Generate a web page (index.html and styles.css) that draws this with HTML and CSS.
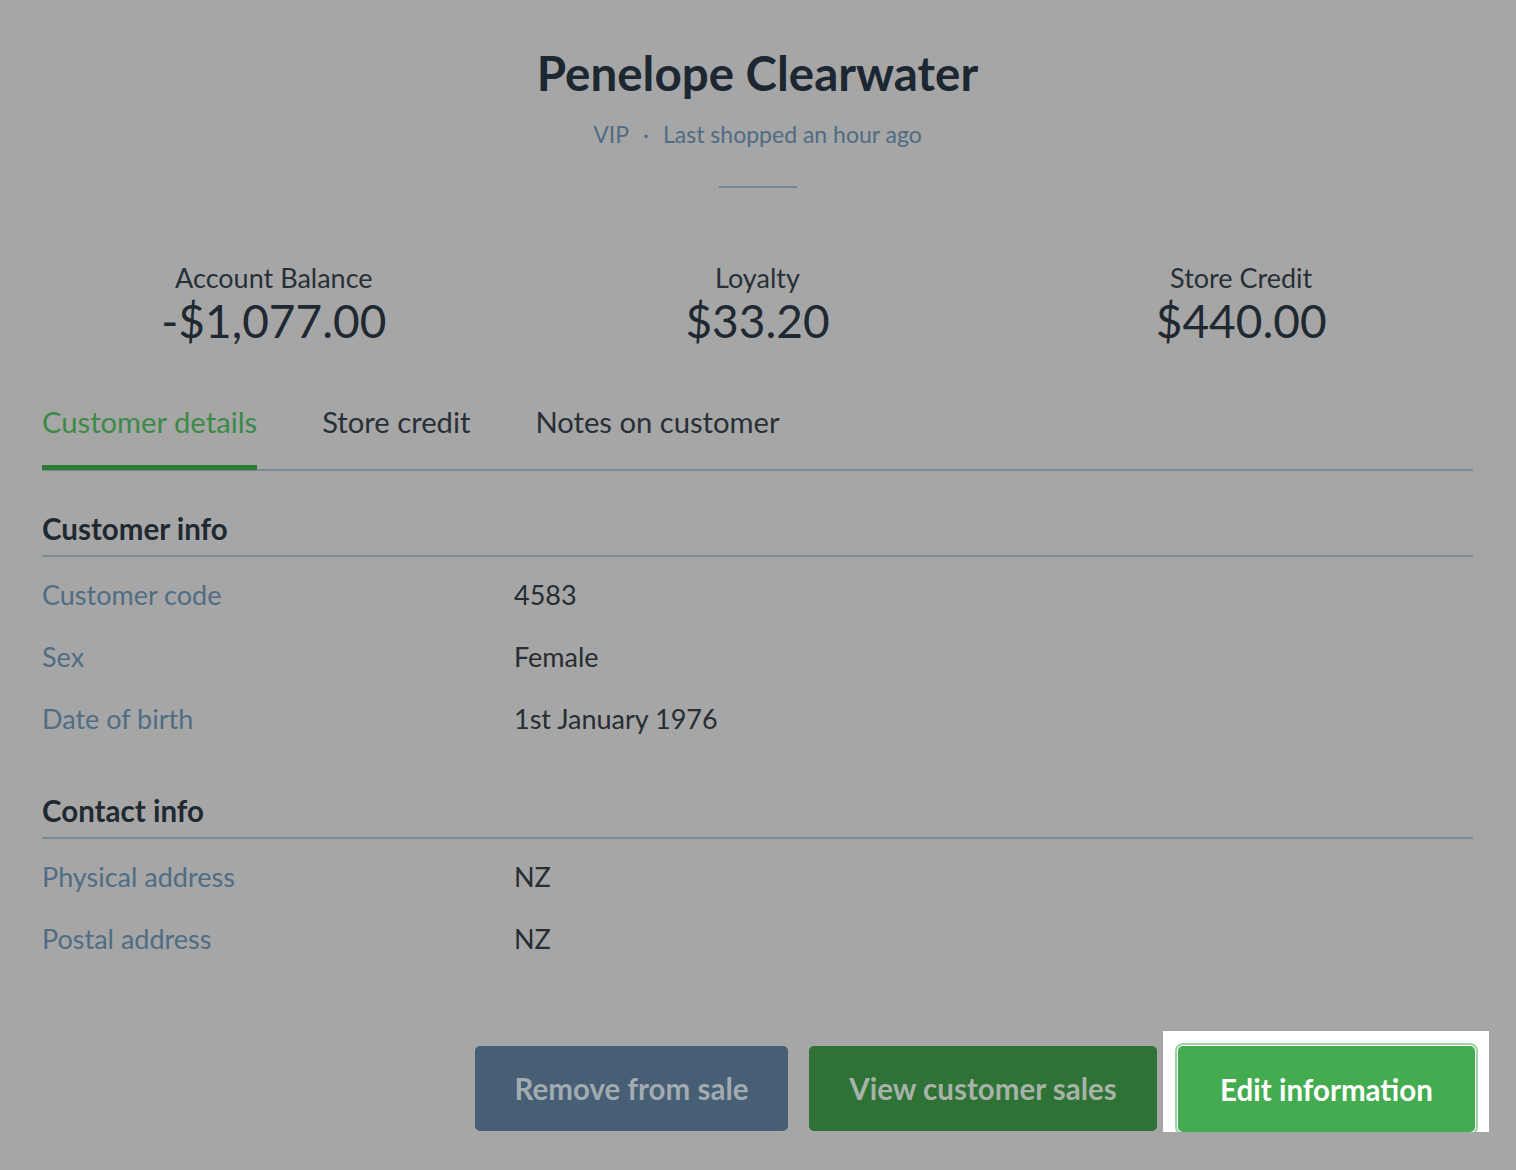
FILE: index.html
```html
<!DOCTYPE html>
<html>
<head>
<meta charset="utf-8">
<link rel="stylesheet" href="styles.css">
</head>
<body>
<div class="page">
  <header class="profile">
    <h1 class="name">Penelope Clearwater</h1>
    <div class="meta"><span>VIP</span><span class="dot">·</span><span>Last shopped an hour ago</span></div>
    <div class="rule"></div>
  </header>

  <section class="stats">
    <div class="stat"><div class="stat-label">Account Balance</div><div class="stat-value">-$1,077.00</div></div>
    <div class="stat"><div class="stat-label">Loyalty</div><div class="stat-value">$33.20</div></div>
    <div class="stat"><div class="stat-label">Store Credit</div><div class="stat-value">$440.00</div></div>
  </section>

  <nav class="tabs">
    <div class="tab active">Customer details</div>
    <div class="tab">Store credit</div>
    <div class="tab">Notes on customer</div>
  </nav>

  <section class="group">
    <h2 class="group-title">Customer info</h2>
    <div class="row"><div class="label">Customer code</div><div class="value">4583</div></div>
    <div class="row"><div class="label">Sex</div><div class="value">Female</div></div>
    <div class="row"><div class="label">Date of birth</div><div class="value">1st January 1976</div></div>
  </section>

  <section class="group">
    <h2 class="group-title">Contact info</h2>
    <div class="row"><div class="label">Physical address</div><div class="value">NZ</div></div>
    <div class="row"><div class="label">Postal address</div><div class="value">NZ</div></div>
  </section>

  <div class="actions">
    <button class="btn btn-remove">Remove from sale</button>
    <button class="btn btn-sales">View customer sales</button>
    <div class="spotlight"><button class="btn btn-edit">Edit information</button></div>
  </div>
</div>
</body>
</html>
```
FILE: styles.css
```css
html, body {
  margin: 0;
  padding: 0;
  background: #a6a6a6;
}
body {
  font-family: Lato, "Noto Sans", sans-serif;
  color: #1f2932;
}
.page {
  padding: 0 43px 0 42px;
}
.profile {
  text-align: center;
  padding-top: 46px;
}
.name {
  margin: 0;
  font-size: 47.5px;
  font-weight: 700;
  line-height: 54px;
  color: #1d2731;
}
.meta {
  margin-top: 21px;
  font-size: 23px;
  line-height: 26px;
  color: #4f6c83;
}
.meta .dot {
  margin: 0 14px;
}
.rule {
  width: 78px;
  height: 2px;
  background: #70879a;
  margin: 39px auto 0;
}
.stats {
  display: flex;
  margin: 75px -10px 0;
}
.stat {
  flex: 1;
  text-align: center;
}
.stat-label {
  font-size: 27px;
  line-height: 30px;
  color: #283037;
}
.stat-value {
  font-size: 46px;
  line-height: 56px;
  color: #1f2932;
}
.tabs {
  display: flex;
  gap: 65px;
  margin-top: 56px;
  border-bottom: 2px solid #7d8a90;
}
.tab {
  font-size: 29.2px;
  line-height: 34px;
  padding-bottom: 30px;
  color: #283037;
}
.tab.active {
  color: #3c8a46;
  box-shadow: inset 0 -5px 0 #2c7c35;
  margin-bottom: -1px;
  padding-bottom: 31px;
}
.group {
  margin-top: 41px;
}
.group + .group {
  margin-top: 59px;
}
.group-title {
  margin: 0;
  font-size: 29.5px;
  font-weight: 700;
  line-height: 34px;
  padding-bottom: 9px;
  border-bottom: 2px solid #7d8a90;
  color: #1f2932;
}
.row {
  display: flex;
  font-size: 27px;
  line-height: 32px;
  margin-top: 30px;
}
.group-title + .row {
  margin-top: 22px;
}
.label {
  width: 472px;
  color: #4f6d84;
}
.value {
  color: #272d32;
}
.actions {
  display: flex;
  justify-content: flex-end;
  gap: 21px;
  margin-top: 91px;
  margin-right: -2px;
}
.btn {
  font-family: Lato, "Noto Sans", sans-serif;
  font-size: 29.5px;
  font-weight: 700;
  height: 85px;
  border: none;
  border-radius: 5px;
  padding: 0 30px;
}
.btn-remove {
  width: 313px;
  background: #465f75;
  color: #a3aab0;
}
.btn-sales {
  width: 348px;
  background: #2e7236;
  color: #a8b2a9;
}
.spotlight {
  background: #ffffff;
  padding: 15px 14px 15px 15px;
  margin: -15px -14px -15px -15px;
}
.btn-edit {
  display: block;
  width: 297px;
  height: 86px;
  background: #44ab51;
  color: #ffffff;
  box-shadow: 0 0 0 1px #ffffff, 0 0 0 3px #9ed3a4;
}
```
